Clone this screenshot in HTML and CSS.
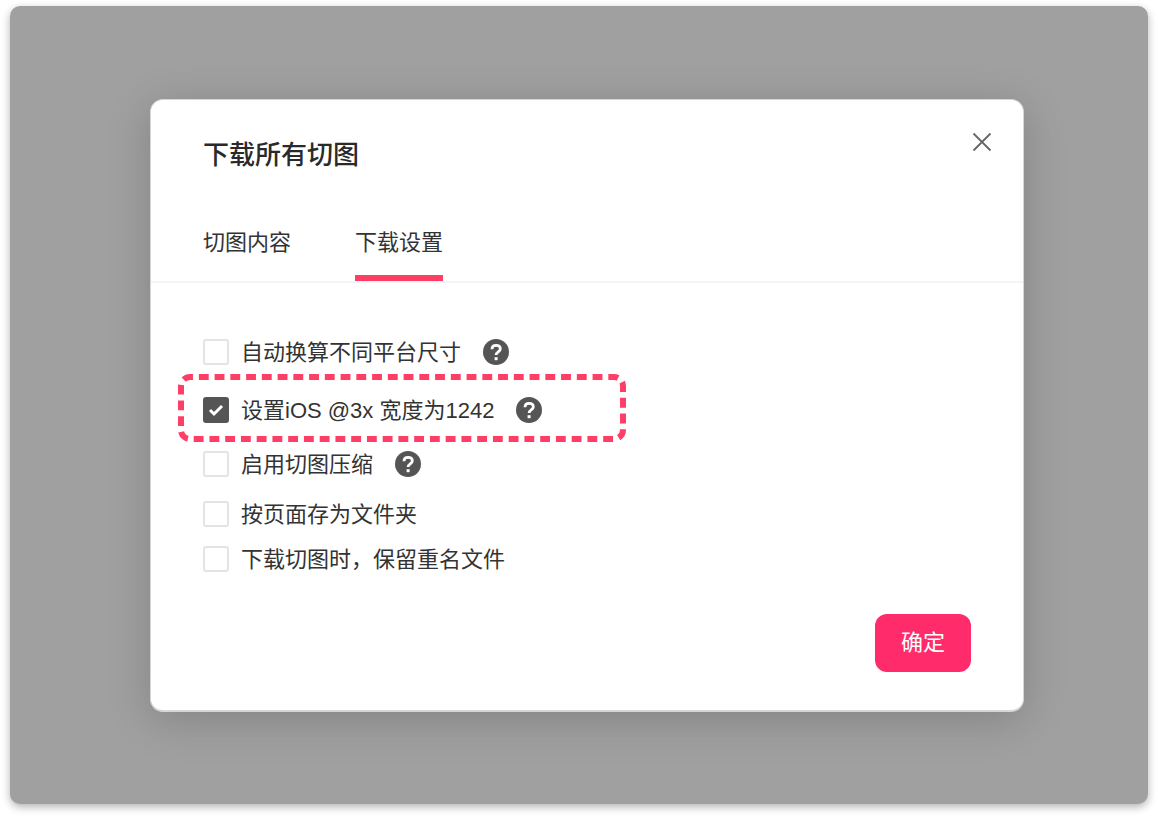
FILE: index.html
```html
<!DOCTYPE html>
<html lang="zh-CN">
<head>
<meta charset="utf-8">
<meta name="viewport" content="width=device-width, initial-scale=1">
<title>下载所有切图</title>
<link rel="stylesheet" href="styles.css">
</head>
<body>
<svg class="sprite" aria-hidden="true">
  <symbol id="help" viewBox="0 0 26 26">
    <circle cx="13" cy="13" r="13" fill="#555"/>
    <path d="M9 10.300C9 7.700 10.700 6.300 13.100 6.300s4.200 1.400 4.200 3.600c0 3-4.200 3-4.200 6.200" fill="none" stroke="#fff" stroke-width="2.800"/>
    <path d="M11.600 18.200h3v3h-3z" fill="#fff"/>
  </symbol>
</svg>
<main class="backdrop">
  <section class="dialog" role="dialog" aria-labelledby="title">
    <header class="head">
      <h1 class="title" id="title">下载所有切图</h1>
      <button class="close" type="button" aria-label="关闭">
        <svg width="20" height="20" viewBox="0 0 20 20" aria-hidden="true"><path d="M1.500 1.500 18.500 18.500M18.500 1.500 1.500 18.500" fill="none" stroke="#666" stroke-width="1.800"/></svg>
      </button>
    </header>
    <nav class="tabs">
      <button class="tab" type="button">切图内容</button>
      <button class="tab active" type="button">下载设置</button>
    </nav>
    <form class="body">
      <div class="group">
        <div class="row">
          <label class="option"><input class="check" type="checkbox"><span class="text">自动换算不同平台尺寸</span></label>
          <button class="help" type="button" aria-label="帮助"><svg class="icon"><use href="#help"/></svg></button>
        </div>
        <div class="row highlight">
          <svg class="outline" aria-hidden="true"><rect class="dashes" x="3" y="3" rx="9" pathLength="1008"/></svg>
          <label class="option"><input class="check" type="checkbox" checked><span class="text">设置iOS @3x 宽度为1242</span></label>
          <button class="help" type="button" aria-label="帮助"><svg class="icon"><use href="#help"/></svg></button>
        </div>
        <div class="row">
          <label class="option"><input class="check" type="checkbox"><span class="text">启用切图压缩</span></label>
          <button class="help" type="button" aria-label="帮助"><svg class="icon"><use href="#help"/></svg></button>
        </div>
      </div>
      <div class="group plain">
        <div class="row"><label class="option"><input class="check" type="checkbox"><span class="text">按页面存为文件夹</span></label></div>
        <div class="row"><label class="option"><input class="check" type="checkbox"><span class="text">下载切图时，保留重名文件</span></label></div>
      </div>
      <button class="confirm" type="button">确定</button>
    </form>
  </section>
</main>
</body>
</html>
```
FILE: styles.css
```css
* { box-sizing: border-box; }

body {
  margin: 0;
  padding: 6px 10px 14px;
  background: #fff;
  color: #333;
  font: 22px/28px "Liberation Sans", "Noto Sans CJK SC", sans-serif;
}

button {
  margin: 0;
  padding: 0;
  border: 0;
  background: none;
  color: inherit;
  font: inherit;
  cursor: pointer;
}

.sprite { position: absolute; width: 0; height: 0; }

.backdrop {
  padding: 93px 124px 92px 140px;
  border-radius: 10px;
  background: #a0a0a0;
  box-shadow: 0 3px 8px rgba(0, 0, 0, 0.3);
}

.dialog {
  border: 1px solid #d6d6d6;
  border-bottom-width: 2px;
  border-radius: 13px;
  background: #fff;
  box-shadow: 0 8px 44px rgba(0, 0, 0, 0.18);
}

.head {
  display: flex;
  justify-content: space-between;
  align-items: flex-start;
  padding: 26px 25px 0 52px;
}

.title {
  margin: 0;
  padding-top: 11px;
  color: #2a2a2a;
  font-size: 26px;
  line-height: 36px;
  font-weight: 500;
}

.close {
  display: grid;
  place-items: center;
  width: 32px;
  height: 32px;
}

.tabs {
  display: flex;
  gap: 64px;
  padding: 54px 52px 0;
  border-bottom: 2px solid #f4f4f4;
}

.tab {
  padding-bottom: 16px;
  border-bottom: 6px solid transparent;
  line-height: 32px;
}

.active { border-bottom-color: #ff3e66; }

.body {
  display: flex;
  flex-direction: column;
  padding: 54px 52px 38px;
}

.group { display: flex; flex-direction: column; gap: 7px; }

.plain { gap: 15px; margin-top: 20px; }

.row { display: flex; align-items: center; gap: 22px; }

.highlight {
  position: relative;
  max-width: 448px;
  margin-left: -25px;
  padding: 21px 25px 17px;
}

.outline {
  position: absolute;
  inset: 0;
  width: 100%;
  height: 100%;
  pointer-events: none;
}

.dashes {
  width: calc(100% - 6px);
  height: calc(100% - 6px);
  fill: none;
  stroke: #ff3e66;
  stroke-width: 6px;
  stroke-dasharray: 10 6;
  stroke-dashoffset: 7;
}

.option { display: flex; align-items: center; gap: 12px; }

.text { padding-top: 2px; }

.check {
  appearance: none;
  width: 26px;
  height: 26px;
  margin: 0;
  border: 2px solid #e4e4e4;
  border-radius: 3px;
  background: #fff;
}

.check:checked {
  border-color: #555;
  background: #555 url("data:image/svg+xml,%3Csvg xmlns='http://www.w3.org/2000/svg' viewBox='0 0 22 22'%3E%3Cpath d='M5 11l4 4 8-8' fill='none' stroke='white' stroke-width='3'/%3E%3C/svg%3E") center / 22px no-repeat;
}

.help, .icon { display: block; width: 26px; height: 26px; }

.confirm {
  align-self: flex-end;
  margin-top: 40px;
  padding: 15px 26px;
  border-radius: 12px;
  background: #ff2b6b;
  color: #fff;
}
```
